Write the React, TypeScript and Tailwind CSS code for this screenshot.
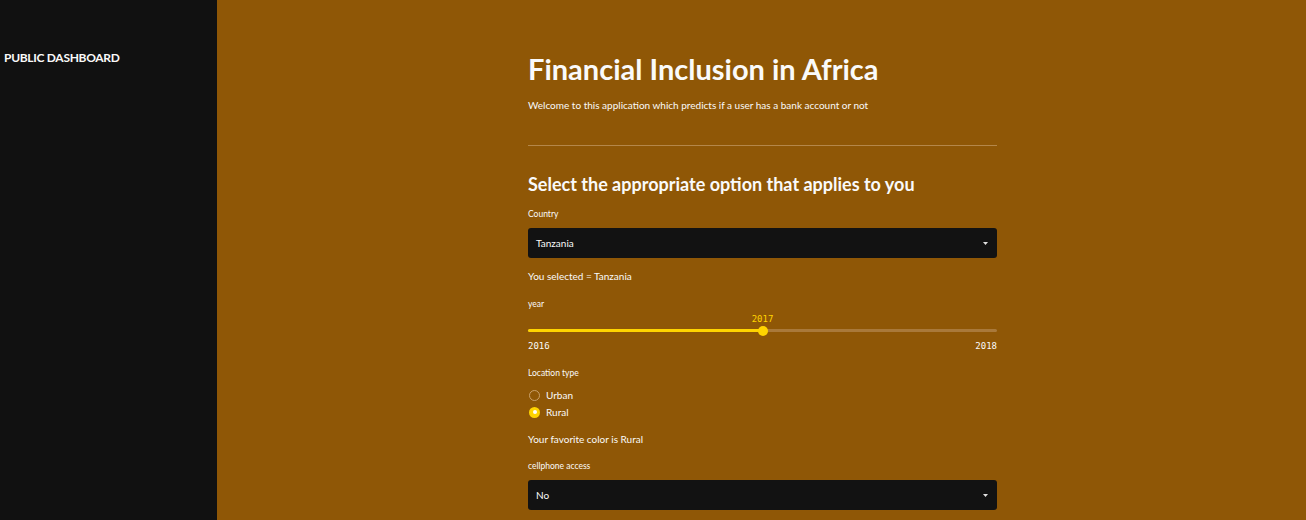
import React from 'react';

function Select({ value }: { value: string }) {
  return (
    <div className="flex h-[30px] items-center justify-between rounded-[3px] bg-[#121212] pl-2 pr-[9px]">
      <span className="text-[10px] text-[#fafafa]">{value}</span>
      <svg width="5" height="3" viewBox="0 0 5 3">
        <path d="M0 0h5L2.5 3z" fill="#e0e0e0" />
      </svg>
    </div>
  );
}

function Label({ children }: { children: React.ReactNode }) {
  return <div className="text-[8.5px] leading-[12px] text-[#fafafa]">{children}</div>;
}

export default function App() {
  return (
    <div className="flex h-[520px] w-full overflow-hidden font-['Lato',sans-serif] text-[#fafafa]">
      {/* Sidebar */}
      <aside className="w-[217px] shrink-0 bg-[#111111] pl-1 pt-[49px]">
        <div className="text-[12px] font-bold tracking-tight">PUBLIC DASHBOARD</div>
      </aside>

      {/* Main */}
      <main className="flex flex-1 justify-center bg-[#8f5706] pl-[2px]">
        <div className="w-[469px] pt-[51px]">
          <h1 className="text-[29px] font-bold leading-[36px]">Financial Inclusion in Africa</h1>
          <p className="mt-[11px] text-[10px] leading-[14px]">
            Welcome to this application which predicts if a user has a bank account or not
          </p>
          <hr className="mt-[33px] border-0 border-t border-[#b4874a]" />

          <h2 className="mt-[26px] text-[18px] font-bold leading-[24px]">
            Select the appropriate option that applies to you
          </h2>

          <div className="mt-[12px]">
            <Label>Country</Label>
          </div>
          <div className="mt-[8px]">
            <Select value="Tanzania" />
          </div>
          <p className="mt-[11px] text-[10px] leading-[14px]">You selected = Tanzania</p>

          <div className="mt-[15px]">
            <Label>year</Label>
          </div>
          {/* Slider */}
          <div className="mt-[3px]">
            <div className="relative h-[24px]">
              <span
                className="absolute top-0 -translate-x-1/2 font-['DejaVu_Sans_Mono',monospace] text-[9px] text-[#ffd400]"
                style={{ left: '50%' }}
              >
                2017
              </span>
              <div className="absolute bottom-[5px] left-0 right-0 h-[3px] rounded-full bg-[#a9793a]" />
              <div className="absolute bottom-[5px] left-0 h-[3px] w-1/2 rounded-full bg-[#ffd400]" />
              <div className="absolute bottom-[1.5px] left-1/2 h-[10px] w-[10px] -translate-x-1/2 rounded-full bg-[#ffd400]" />
            </div>
            <div className="mt-[3px] flex justify-between font-['DejaVu_Sans_Mono',monospace] text-[9px] leading-[12px]">
              <span>2016</span>
              <span>2018</span>
            </div>
          </div>

          <div className="mt-[15px]">
            <Label>Location type</Label>
          </div>
          <div className="mt-[10px] flex flex-col gap-[5px] text-[10px] leading-[12px]">
            <div className="flex items-center gap-[6px] pl-[1px]">
              <span className="h-[11px] w-[11px] rounded-full border border-[#c9a06a]" />
              <span>Urban</span>
            </div>
            <div className="flex items-center gap-[6px] pl-[1px]">
              <span className="flex h-[11px] w-[11px] items-center justify-center rounded-full bg-[#ffd400]">
                <span className="h-[4px] w-[4px] rounded-full bg-white" />
              </span>
              <span>Rural</span>
            </div>
          </div>
          <p className="mt-[14px] text-[10px] leading-[14px]">Your favorite color is Rural</p>

          <div className="mt-[14px]">
            <Label>cellphone access</Label>
          </div>
          <div className="mt-[8px]">
            <Select value="No" />
          </div>
        </div>
      </main>
    </div>
  );
}
